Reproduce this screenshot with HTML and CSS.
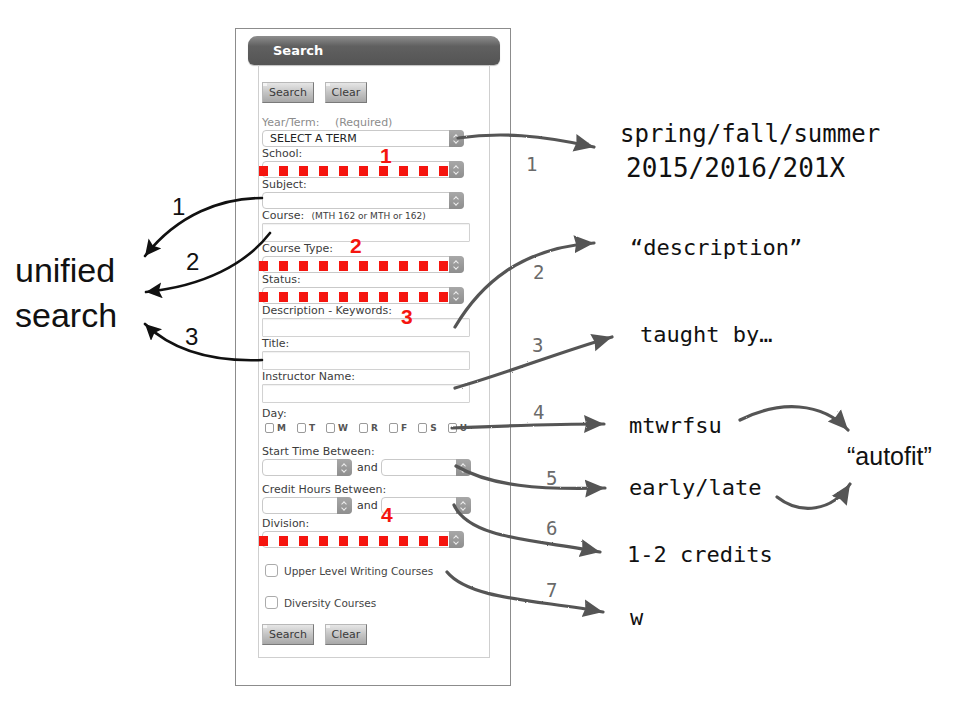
FILE: index.html
```html
<!DOCTYPE html>
<html lang="en">
<head>
    <meta charset="UTF-8">
    <title>Course Search - notes</title>
    <link rel="stylesheet" href="styles.css">
</head>
<body>
    <!-- search form -->
    <div class="frame">
        <div class="frame-head">Search</div>
        <div class="panel">
            <div class="btn-row">
                <button class="btn btn-search">Search</button>
                <button class="btn btn-clear">Clear</button>
            </div>

            <div class="field">
                <div class="lbl lbl-muted">Year/Term: <span class="req">(Required)</span></div>
                <div class="select"><span class="select-text">SELECT A TERM</span><span class="stepper"></span></div>
            </div>
            <div class="field">
                <div class="lbl">School:</div>
                <div class="select redacted"><span class="select-text"></span><span class="stepper"></span></div>
            </div>
            <div class="field">
                <div class="lbl">Subject:</div>
                <div class="select"><span class="select-text"></span><span class="stepper"></span></div>
            </div>
            <div class="field">
                <div class="lbl">Course: <span class="hint">(MTH 162 or MTH or 162)</span></div>
                <div class="input"></div>
            </div>
            <div class="field">
                <div class="lbl">Course Type:</div>
                <div class="select redacted"><span class="select-text"></span><span class="stepper"></span></div>
            </div>
            <div class="field">
                <div class="lbl">Status:</div>
                <div class="select redacted"><span class="select-text"></span><span class="stepper"></span></div>
            </div>
            <div class="field">
                <div class="lbl">Description - Keywords:</div>
                <div class="input"></div>
            </div>
            <div class="field">
                <div class="lbl">Title:</div>
                <div class="input"></div>
            </div>
            <div class="field">
                <div class="lbl">Instructor Name:</div>
                <div class="input"></div>
            </div>

            <div class="field field-day">
                <div class="lbl">Day:</div>
                <div class="days">
                    <span class="day"><span class="box"></span>M</span>
                    <span class="day"><span class="box"></span>T</span>
                    <span class="day"><span class="box"></span>W</span>
                    <span class="day"><span class="box"></span>R</span>
                    <span class="day"><span class="box"></span>F</span>
                    <span class="day"><span class="box"></span>S</span>
                    <span class="day"><span class="box"></span>U</span>
                </div>
            </div>

            <div class="field field-time">
                <div class="lbl">Start Time Between:</div>
                <div class="pair">
                    <div class="select select-half"><span class="select-text"></span><span class="stepper"></span></div>
                    <span class="and">and</span>
                    <div class="select select-half"><span class="select-text"></span><span class="stepper"></span></div>
                </div>
            </div>
            <div class="field field-credit">
                <div class="lbl">Credit Hours Between:</div>
                <div class="pair">
                    <div class="select select-half"><span class="select-text"></span><span class="stepper"></span></div>
                    <span class="and">and</span>
                    <div class="select select-half"><span class="select-text"></span><span class="stepper"></span></div>
                </div>
            </div>
            <div class="field field-division">
                <div class="lbl">Division:</div>
                <div class="select redacted"><span class="select-text"></span><span class="stepper"></span></div>
            </div>

            <div class="check-row check-writing"><span class="check"></span>Upper Level Writing Courses</div>
            <div class="check-row check-diversity"><span class="check"></span>Diversity Courses</div>

            <div class="btn-row btn-row-bottom">
                <button class="btn btn-search">Search</button>
                <button class="btn btn-clear">Clear</button>
            </div>
        </div>
    </div>

    <!-- annotations -->
    <svg class="notes" width="961" height="706" viewBox="0 0 961 706">
        <defs>
            <marker id="head-black" markerUnits="userSpaceOnUse" markerWidth="20" markerHeight="18" refX="16" refY="8" orient="auto">
                <path d="M0,0 L16,8 L0,16 L3,8 z" fill="#111"/>
            </marker>
            <marker id="head-grey" markerUnits="userSpaceOnUse" markerWidth="24" markerHeight="22" refX="20" refY="10" orient="auto">
                <path d="M0,1 L20,10 L0,19 L2,10 z" fill="#555"/>
            </marker>
            <filter id="rough" x="-5%" y="-5%" width="110%" height="110%">
                <feTurbulence type="fractalNoise" baseFrequency="0.8" numOctaves="1" result="noise"/>
                <feDisplacementMap in="SourceGraphic" in2="noise" scale="2"/>
            </filter>
        </defs>

        <!-- red markers -->
        <text class="red-num" x="380" y="163">1</text>
        <text class="red-num" x="350" y="253">2</text>
        <text class="red-num" x="401" y="324">3</text>
        <text class="red-num" x="381" y="522">4</text>

        <!-- left side -->
        <g class="arrows-black" fill="none" stroke="#111" stroke-width="2.6" stroke-linecap="round">
            <path d="M262,198 C222,198 178,214 145,256" marker-end="url(#head-black)"/>
            <path d="M270,233 C246,264 204,286 146,292" marker-end="url(#head-black)"/>
            <path d="M262,360 C212,362 172,350 145,324" marker-end="url(#head-black)"/>
        </g>
        <text class="big" x="15" y="282">unified</text>
        <text class="big" x="15" y="327">search</text>
        <text class="black-num" x="172" y="215">1</text>
        <text class="black-num" x="186" y="270">2</text>
        <text class="black-num" x="185" y="345">3</text>

        <!-- right side -->
        <g class="arrows-grey" fill="none" stroke="#555" stroke-width="3.2" stroke-linecap="round" filter="url(#rough)">
            <path d="M458,138 C500,132 540,135 594,147" marker-end="url(#head-grey)"/>
            <path d="M455,327 C480,285 520,248 594,243" marker-end="url(#head-grey)"/>
            <path d="M455,388 C510,372 560,352 612,337" marker-end="url(#head-grey)"/>
            <path d="M452,428 C500,426 550,424 604,424" marker-end="url(#head-grey)"/>
            <path d="M456,466 C490,486 540,490 605,488" marker-end="url(#head-grey)"/>
            <path d="M454,505 C470,540 540,540 600,552" marker-end="url(#head-grey)"/>
            <path d="M447,572 C470,600 540,600 603,612" marker-end="url(#head-grey)"/>
            <path d="M740,420 C780,400 822,402 848,430" marker-end="url(#head-grey)"/>
            <path d="M777,497 C800,515 832,512 850,484" marker-end="url(#head-grey)"/>
        </g>

        <text class="grey-num" x="526" y="171">1</text>
        <text class="grey-num" x="533" y="279">2</text>
        <text class="grey-num" x="532" y="352">3</text>
        <text class="grey-num" x="533" y="419">4</text>
        <text class="grey-num" x="546" y="485">5</text>
        <text class="grey-num" x="546" y="535">6</text>
        <text class="grey-num" x="546" y="597">7</text>

        <text class="mono mono-lg" x="620" y="142">spring/fall/summer</text>
        <text class="mono mono-xl" x="626" y="177">2015/2016/201X</text>
        <text class="mono" x="630" y="255">“description”</text>
        <text class="mono" x="640" y="342">taught by…</text>
        <text class="mono" x="629" y="433">mtwrfsu</text>
        <text class="mono" x="629" y="495">early/late</text>
        <text class="mono" x="627" y="562">1-2 credits</text>
        <text class="mono" x="630" y="625">w</text>
        <text class="autofit" x="847" y="465">“autofit”</text>
    </svg>
</body>
</html>
```

FILE: styles.css
```css
* {
    margin: 0;
    padding: 0;
    box-sizing: border-box;
}

body {
    position: relative;
    width: 961px;
    height: 706px;
    padding: 28px 0 0 235px;
    background: #fff;
    font-family: "DejaVu Sans", Verdana, sans-serif;
    overflow: hidden;
}

/* form frame */
.frame {
    width: 276px;
    height: 658px;
    border: 1px solid #8c8c8c;
    padding-top: 7px;
}

.frame-head {
    margin: 0 10px 0 12px;
    height: 29px;
    padding-left: 25px;
    line-height: 30px;
    border-radius: 9px 9px 6px 6px;
    background: linear-gradient(#8e8e8e, #606060 35%, #545454);
    box-shadow: 0 1px 1px rgba(0, 0, 0, 0.25);
    color: #fff;
    font-size: 13px;
    font-weight: bold;
}

.panel {
    margin: 0 20px 0 22px;
    height: 593px;
    border: 1px solid #cfcfcf;
    border-top: none;
    padding: 17px 0 0 3px;
}

/* buttons */
.btn-row {
    display: flex;
    gap: 11px;
}

.btn {
    position: relative;
    height: 21px;
    border: 1px solid #7a7a7a;
    border-top-color: #b8b8b8;
    border-left-color: #b8b8b8;
    background: linear-gradient(#e6e6e6, #c4c4c4 50%, #a8a8a8);
    color: #3a3a3a;
    font-family: "DejaVu Sans", Verdana, sans-serif;
    font-size: 11px;
    line-height: 19px;
    text-align: center;
}

.btn::before {
    content: '';
    position: absolute;
    top: 0;
    left: 0;
    width: 4px;
    height: 3px;
    background: #f4f4f4;
}

.btn-search { width: 52px; }
.btn-clear { width: 42px; }

.btn-row-bottom {
    margin-top: 15px;
}

/* fields */
.btn-row + .field {
    margin-top: 13px;
}

.lbl {
    height: 14px;
    line-height: 14px;
    font-size: 11px;
    color: #3c3c3c;
    white-space: nowrap;
}

.lbl-muted {
    color: #8c8c8c;
}

.req {
    margin-left: 12px;
}

.hint {
    margin-left: 4px;
    font-size: 9px;
}

.select {
    position: relative;
    display: flex;
    width: 202px;
    height: 17px;
    border: 1px solid #c9c9c9;
    border-radius: 4px;
    background: #fff;
}

.select-text {
    flex: 1;
    padding-left: 7px;
    font-size: 11px;
    line-height: 15px;
    color: #222;
}

.stepper {
    position: relative;
    width: 15px;
    margin: -1px -1px -1px 0;
    border-radius: 0 4px 4px 0;
    background: linear-gradient(#a8a8a8, #8e8e8e);
}

.stepper::before,
.stepper::after {
    content: '';
    position: absolute;
    left: 5px;
    width: 3px;
    height: 3px;
    border-left: 1px solid #eee;
    border-top: 1px solid #eee;
}

.stepper::before {
    top: 5px;
    transform: rotate(45deg);
}

.stepper::after {
    top: 9px;
    transform: rotate(225deg);
}

/* red marker over hidden selects */
.redacted::after {
    content: '';
    position: absolute;
    left: -4px;
    top: 4px;
    width: 189px;
    height: 10px;
    background: repeating-linear-gradient(to right, #f5150f 0 9px, transparent 9px 20px);
}

.input {
    width: 208px;
    height: 19px;
    border: 1px solid #d2d2d2;
    border-radius: 1px;
    background: #fff;
    box-shadow: inset 0 1px 1px rgba(0, 0, 0, 0.06);
}

/* day checkboxes */
.field-day { margin-top: 4px; }

.days {
    display: flex;
    align-items: center;
    height: 12px;
    margin-top: 1px;
    padding-left: 3px;
}

.day {
    display: flex;
    align-items: center;
    margin-right: 11px;
    font-size: 9px;
    font-weight: bold;
    color: #555;
}

.box {
    width: 9px;
    height: 10px;
    margin-right: 3px;
    border: 1px solid #9a9a9a;
    border-radius: 2px;
}

.field-time { margin-top: 11px; }
.field-credit { margin-top: 7px; }
.field-division { margin-top: 3px; }

.pair {
    display: flex;
    align-items: center;
}

.select-half {
    width: 90px;
}

.and {
    margin: 0 3px 0 5px;
    font-size: 11px;
    color: #333;
}

/* bottom checkboxes */
.check-row {
    display: flex;
    align-items: center;
    gap: 6px;
    height: 13px;
    padding-left: 3px;
    font-size: 10.5px;
    color: #444;
}

.check {
    width: 13px;
    height: 13px;
    border: 1px solid #ababab;
    border-radius: 3px;
    background: #fff;
}

.check-writing { margin-top: 16px; }
.check-diversity { margin-top: 19px; }

/* annotation layer */
.notes {
    position: absolute;
    top: 0;
    left: 0;
}

.red-num {
    font-family: "Liberation Sans", Arial, sans-serif;
    font-weight: bold;
    font-size: 21px;
    fill: #f5150f;
}

.big {
    font-family: "Liberation Sans", Arial, sans-serif;
    font-size: 34px;
    fill: #111;
}

.black-num {
    font-family: "Liberation Sans", Arial, sans-serif;
    font-size: 24px;
    fill: #111;
}

.grey-num {
    font-family: "DejaVu Sans Mono", monospace;
    font-size: 19px;
    fill: #6a6a6a;
}

.mono {
    font-family: "DejaVu Sans Mono", "Liberation Mono", monospace;
    font-size: 22px;
    fill: #111;
}

.mono-lg { font-size: 24px; }
.mono-xl { font-size: 26px; }

.autofit {
    font-family: "Liberation Sans", Arial, sans-serif;
    font-size: 25px;
    fill: #111;
}
```
